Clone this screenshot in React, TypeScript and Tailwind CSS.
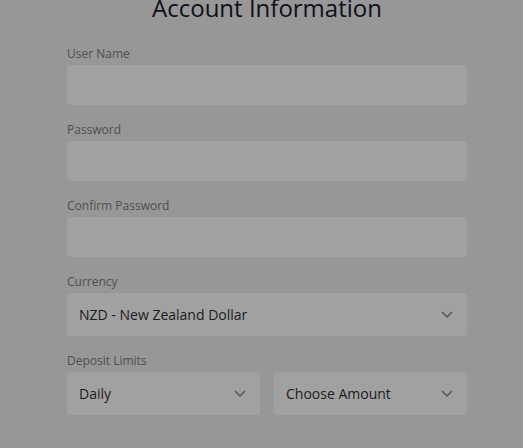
import React from "react";

const Chevron = () => (
  <svg width="12" height="8" viewBox="0 0 12 8" fill="none" className="shrink-0">
    <path d="M1.5 1.5L6 6L10.5 1.5" stroke="#5a5a5a" strokeWidth="1.7" strokeLinecap="round" strokeLinejoin="round" />
  </svg>
);

const Label = ({ children }: { children: React.ReactNode }) => (
  <label className="text-[12px] leading-[17px] text-[#4f4f4f]">{children}</label>
);

const Field = ({ label }: { label: string }) => (
  <div className="flex flex-col gap-[3px]">
    <Label>{label}</Label>
    <div className="h-10 rounded bg-[#a1a1a1]" />
  </div>
);

const Select = ({ value }: { value: string }) => (
  <div className="h-[43px] w-full rounded bg-[#a1a1a1] flex items-center justify-between pl-3 pr-[14px]">
    <span className="text-[14px] text-[#1c1c1c]">{value}</span>
    <Chevron />
  </div>
);

export default function App() {
  return (
    <div
      className="min-h-screen w-full bg-[#979797] overflow-hidden"
      style={{ fontFamily: '"Open Sans", "Noto Sans", sans-serif' }}
    >
      <div className="w-[400px] ml-[67px]">
        <h1 className="-mt-2 text-center text-[24px] leading-8 text-[#10101a]">Account Information</h1>

        <div className="mt-[21px] flex flex-col gap-4">
          <Field label="User Name" />
          <Field label="Password" />
          <Field label="Confirm Password" />

          <div className="flex flex-col gap-[3px]">
            <Label>Currency</Label>
            <Select value="NZD - New Zealand Dollar" />
          </div>

          <div className="flex flex-col gap-[3px]">
            <Label>Deposit Limits</Label>
            <div className="grid grid-cols-2 gap-[14px]">
              <Select value="Daily" />
              <Select value="Choose Amount" />
            </div>
          </div>
        </div>
      </div>
    </div>
  );
}
